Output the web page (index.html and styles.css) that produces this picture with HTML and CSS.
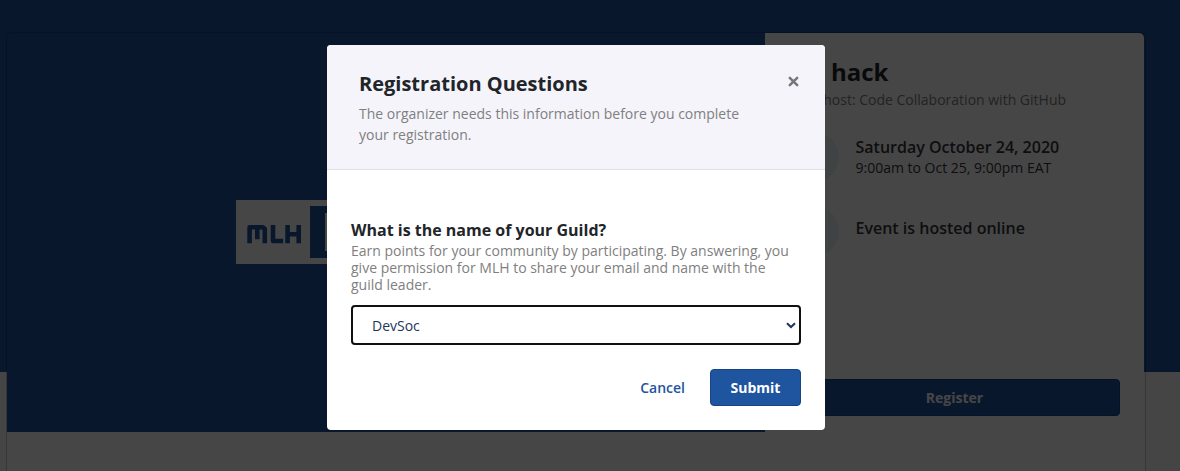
FILE: index.html
```html
<!DOCTYPE html>
<html lang="en">
<head>
<meta charset="utf-8">
<title>Registration Questions</title>
<link rel="stylesheet" href="styles.css">
</head>
<body>
<main class="page">
  <section class="event">
    <div class="hero">
      <div class="banner">
        <svg class="logo" width="288" height="64" viewBox="0 0 288 64">
          <rect width="288" height="64" fill="#fff"/>
          <g fill="none" stroke="#1f549f" stroke-width="4.6" stroke-linejoin="round">
            <path d="M13.6 43.3V27.3H27L28.8 29V43.3M21.3 27V39.3M37 25V41H47.2M51.6 25V43.3M62.7 25V43.3M51 34.2H63"/>
          </g>
          <rect x="74" y="6" width="206" height="52" fill="#1f549f"/>
          <rect x="89" y="13" width="180" height="38" fill="#fff"/>
        </svg>
      </div>
      <aside class="summary">
        <h1 class="event-title">hack</h1>
        <p class="cohost">Cohost: Code Collaboration with GitHub</p>
        <div class="fact">
          <span class="disc"><svg width="22" height="22" viewBox="0 0 22 22"><circle cx="11" cy="11" r="10" fill="none" stroke="#111a44" stroke-width="2"/><path d="M11 5v6l4 3" fill="none" stroke="#111a44" stroke-width="2"/></svg></span>
          <div><div class="fact-title">Saturday October 24, 2020</div><div class="fact-sub">9:00am to Oct 25, 9:00pm EAT</div></div>
        </div>
        <div class="fact fact-place">
          <span class="disc"></span>
          <div class="fact-title">Event is hosted online</div>
        </div>
        <button class="button register">Register</button>
      </aside>
    </div>
    <div class="details"></div>
  </section>
</main>
<div class="overlay">
  <div class="modal" role="dialog">
    <header class="modal-head">
      <div>
        <h2 class="modal-title">Registration Questions</h2>
        <p class="modal-text">The organizer needs this information before you complete your registration.</p>
      </div>
      <svg class="close" width="11" height="11" viewBox="0 0 11 11"><path d="M1.8 1.8l7.4 7.4M9.2 1.8L1.8 9.2" stroke="#777" stroke-width="2.5" stroke-linecap="round"/></svg>
    </header>
    <div class="modal-body">
      <div class="question">What is the name of your Guild?</div>
      <p class="help">Earn points for your community by participating. By answering, you give permission for MLH to share your email and name with the guild leader.</p>
      <div class="select"><span>DevSoc</span><svg width="10" height="7" viewBox="0 0 10 7"><path d="M1 1.2L5 5L9 1.2" fill="none" stroke="#1d355a" stroke-width="2"/></svg></div>
      <div class="actions"><a class="cancel">Cancel</a><button class="button submit">Submit</button></div>
    </div>
  </div>
</div>
</body>
</html>
```

FILE: styles.css
```css
* { box-sizing: border-box; }
body { margin: 0; height: 471px; overflow: hidden; font-family: "Open Sans", "Noto Sans", sans-serif; color: #212529; font-size: 14px; }
h1, h2, p { margin: 0; }
.page { height: 471px; padding: 32px 34px 0 6px; background: linear-gradient(#1f549f 372px, #fafafa 372px); }
.event { height: 439px; border: 1px solid rgba(0, 0, 0, .2); border-bottom: 0; border-radius: 6px 6px 0 0; overflow: hidden; }
.hero { display: flex; height: 399px; margin-right: 1px; }
.details { height: 39px; background: #fff; }
.banner { flex: 0 0 758px; padding: 167px 0 0 229px; background: #1f549f; }
.logo { display: block; }
.summary { flex: 1; display: flex; flex-direction: column; padding: 22px 24px 0; background: #fff; border-top-right-radius: 5px; }
.event-title { padding-left: 42px; font-size: 24px; line-height: 34px; font-weight: 700; }
.cohost { padding-left: 17px; font-size: 14px; line-height: 21px; color: #808080; }
.fact { display: flex; gap: 16.5px; align-items: center; height: 50px; margin-top: 22px; color: #35353d; }
.fact-place { margin-top: 24px; }
.fact-place .fact-title { padding-bottom: 6px; }
.disc { display: flex; align-items: center; justify-content: center; flex: 0 0 50px; height: 50px; border-radius: 50%; background: #e6f5f7; }
.fact-title { font-size: 16px; line-height: 22px; font-weight: 600; }
.fact-sub { line-height: 20px; }
.button { height: 37px; border: 1px solid #164487; border-radius: 4px; background: #1f549f; color: #fff; font: 700 14px "Open Sans", sans-serif; }
.register { margin-top: 123px; }
.overlay { position: absolute; inset: 0; padding: 45px 0 0 327px; background: rgba(0, 0, 0, .725); }
.modal { width: 498px; height: 385px; border-radius: 4px; background: #fff; overflow: hidden; }
.modal-head { display: flex; justify-content: space-between; height: 125px; padding: 25px 26px 0 32px; background: #f5f4fb; border-bottom: 1px solid #dee2e6; }
.modal-title { font-size: 20px; line-height: 28px; font-weight: 700; }
.modal-text { width: 400px; padding-top: 5px; line-height: 21px; color: #808080; }
.close { margin-top: 6px; }
.modal-body { padding: 49px 24px 0; }
.question { font-size: 16px; line-height: 23px; font-weight: 700; }
.help { line-height: 17px; color: #808080; }
.select { display: flex; align-items: center; justify-content: space-between; height: 40px; margin-top: 12px; padding: 0 3px 0 19px; border: 2px solid #101010; border-radius: 4px; color: #1d355a; }
.actions { display: flex; justify-content: flex-end; align-items: center; gap: 25px; margin-top: 24px; }
.cancel { color: #1f549f; font-weight: 600; }
.submit { width: 91px; }
```
